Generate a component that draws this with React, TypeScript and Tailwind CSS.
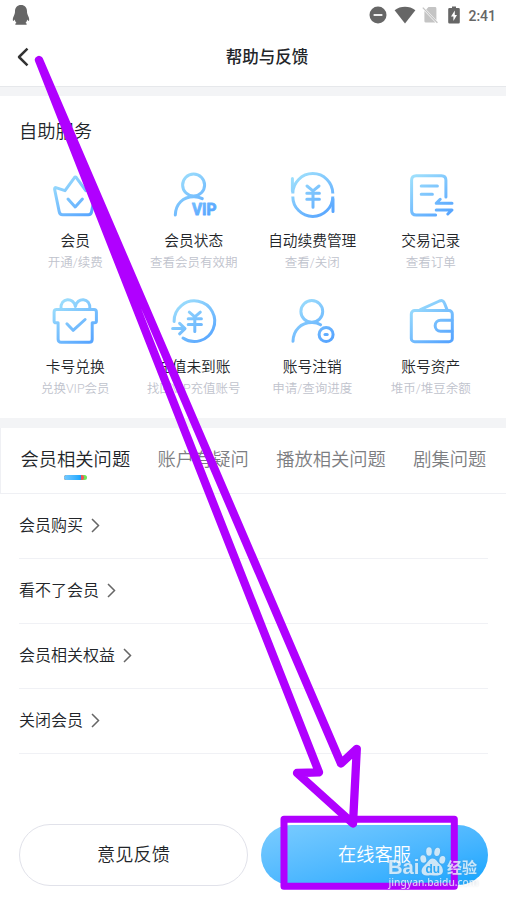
import type { ReactNode } from "react";

const YEN_WIDE = "M19 15l6 4.8 6-4.8M25 19.8v16.4M18.8 22.3h12.6M18.8 28.3h12.6";

function GradientIcon({ id, children }: { id: string; children: ReactNode }) {
  const paint = `url(#${id})`;
  return (
    <svg width="48" height="48" viewBox="0 0 48 48" fill="none" stroke={paint} strokeWidth="3" strokeLinecap="round" strokeLinejoin="round" className="shrink-0 overflow-visible">
      <defs>
        <linearGradient id={id} gradientUnits="userSpaceOnUse" x1="8" y1="3" x2="38" y2="46">
          <stop offset="0" stopColor="#9fe0fc" />
          <stop offset="1" stopColor="#57a5ff" />
        </linearGradient>
      </defs>
      {children}
    </svg>
  );
}

const services = [
  {
    title: "会员",
    hint: "开通/续费",
    art: (
      <>
        <path d="M3.6 18.2Q3.4 16 5.6 16.8L14 19.7 23.3 6.8Q24.4 5.4 25.5 6.8L34.8 19.7 43.2 16.8Q45.4 16 45.1 18.2L40.6 40.6Q40 43.7 37.4 43.7H11.6Q8.8 43.7 8.2 40.6Z" />
        <path d="M17 28l7.2 8 7.2-8" />
      </>
    ),
  },
  {
    title: "会员状态",
    hint: "查看会员有效期",
    art: (
      <>
        <circle cx="23.6" cy="14" r="11" />
        <path d="M5.3 44C5.6 33 13 25.7 23.6 25.7Q28.6 25.6 32.3 27.6" />
        <text x="22" y="44.4" fill="url(#service-1)" strokeWidth="0.9" fontFamily="Roboto, sans-serif" fontWeight="700" fontSize="17" textLength="24.6" lengthAdjust="spacingAndGlyphs">VIP</text>
      </>
    ),
  },
  {
    title: "自动续费管理",
    hint: "查看/关闭",
    art: (
      <>
        <path strokeLinecap="butt" d="M4.8 22.6A20 20 0 0 1 44.8 22.6M4.8 25.4A20 20 0 0 0 44.8 25.4" />
        <path d="M4.4 7.5V20M45 28V40.5" />
        <path d={YEN_WIDE} />
      </>
    ),
  },
  {
    title: "交易记录",
    hint: "查看订单",
    art: (
      <>
        <path d="M38.9 26V9.2Q38.9 4.7 34.4 4.7H9.1Q4.6 4.7 4.6 9.2V39.5Q4.6 44 9.1 44H28.6" />
        <path d="M14.2 15H30.4M14.2 23.3H25.4" />
        <path d="M45 32.3H29.2L33.2 28.3M29.2 39H45L40.8 43" />
      </>
    ),
  },
  {
    title: "卡号兑换",
    hint: "兑换VIP会员",
    art: (
      <>
        <path d="M5.6 12.5H43Q45.4 12.5 45.4 15V24Q45.4 25.8 43.5 25.8H41.2V42.2Q41.2 45.2 38.2 45.2H10.1Q7.1 45.2 7.1 42.2V25.8H5Q3.1 25.8 3.1 24V15Q3.1 12.5 5.6 12.5Z" />
        <path d="M10 12C9 0 23 0 24.4 9.5C25.8 0 39.8 0 38.8 12" />
        <path d="M15.9 26.8l6.2 6.5 12-10.8" />
      </>
    ),
  },
  {
    title: "充值未到账",
    hint: "找回VIP充值账号",
    art: (
      <>
        <path d="M4.1 24.4A20.3 20.3 0 1 1 13 41" />
        <path d="M2.6 31.6H14.8M9.6 26.4l5.4 5.2-5.4 5.2" />
        <path d="M19.3 15.2l5.5 4.6 5.5-4.6M24.8 19.8v14.6M18.2 21.8h13.2M18.2 27.5h13.2" />
      </>
    ),
  },
  {
    title: "账号注销",
    hint: "申请/查询进度",
    art: (
      <>
        <circle cx="23.8" cy="14.4" r="10.9" />
        <path d="M5 44.2C5.3 33 13 25.6 23.8 25.6Q29 25.5 32.6 27.8" />
        <circle cx="38.1" cy="37.5" r="7" />
        <path d="M37 37.5h2.2" />
      </>
    ),
  },
  {
    title: "账号资产",
    hint: "堆币/堆豆余额",
    art: (
      <>
        <rect x="4.3" y="13.5" width="41" height="31.3" rx="3.4" />
        <path d="M13.4 12.6L32.4 4Q36.2 2.6 37.4 6L40 12.6" />
        <path d="M45 23.3H33.6A5.45 5.45 0 0 0 33.6 34.2H45" />
      </>
    ),
  },
];

const tabs = ["会员相关问题", "账户有疑问", "播放相关问题", "剧集问题"];
const questions = ["会员购买", "看不了会员", "会员相关权益", "关闭会员"];

function StatusBar() {
  return (
    <div className="flex h-[29px] items-center pl-[12px] pr-[10px] text-[#666]">
      <svg width="18" height="20" viewBox="0 0 18 20" fill="currentColor">
        <path d="M9 0C5.3 0 3 2.600 3 6.300 3 8.400 2.500 9.500 1.700 11.200 .8 13 .6 14.600 1 15.800 1.400 16.300 2.200 15.500 2.800 14.600 3 16 3.600 17.200 4.500 18 3.300 18.400 3 19 3.500 19.700H14.500C15 19 14.700 18.400 13.500 18 14.400 17.200 15 16 15.200 14.600 15.800 15.500 16.600 16.300 17 15.800 17.400 14.600 17.200 13 16.300 11.200 15.500 9.500 15 8.400 15 6.300 15 2.600 12.700 0 9 0Z" />
      </svg>
      <div className="ml-auto flex items-center">
        <svg width="18" height="18" viewBox="0 0 18 18">
          <circle cx="9" cy="9" r="8.500" fill="currentColor" />
          <path d="M4.600 9h8.800" stroke="#fff" strokeWidth="1.800" />
        </svg>
        <svg width="22" height="18" viewBox="0 0 22 18" fill="currentColor" className="ml-[6.500px]">
          <path d="M11 17.500L.6 4.200C6.600-.4 15.400-.4 21.400 4.200Z" />
        </svg>
        <svg width="16" height="18" viewBox="0 0 16 18" className="ml-[6.500px]">
          <path d="M6.500 1H13Q14.400 1 14.400 2.400V14.200L4.200 3.400ZM2.400 5L13.400 16.600H3.800Q2.400 16.600 2.400 15.200Z" fill="#c4c4c4" />
          <path d="M.8 1.600L15.400 16.800" stroke="#c4c4c4" strokeWidth="1.300" />
        </svg>
        <svg width="12" height="18" viewBox="0 0 12 18" className="ml-[10px]">
          <path d="M4 .5H8V2H10.500Q11.800 2 11.800 3.300V16.200Q11.800 17.500 10.500 17.500H1.500Q.2 17.500 .2 16.200V3.300Q.2 2 1.500 2H4Z" fill="currentColor" />
          <path d="M6.800 4.500L3 10.600H5.400V15L9 8.900H6.800Z" fill="#fff" />
        </svg>
        <span className="ml-[8px] mt-[2px] font-[Roboto,sans-serif] text-[14px] font-medium leading-none">2:41</span>
      </div>
    </div>
  );
}

function Annotation() {
  return (
    <svg className="pointer-events-none absolute left-0 top-0" width="506" height="901" viewBox="0 0 506 901" fill="none" stroke="#b000ff" strokeLinecap="round" strokeLinejoin="round">
      <path strokeWidth="8.300" d="M39 60L319 772.300 297 773 353 823.500 356.800 748.800 341 763.500Z" />
      <rect x="284" y="819.300" width="170.300" height="67" strokeWidth="7" />
    </svg>
  );
}

function Watermark() {
  return (
    <svg className="pointer-events-none absolute left-[386px] top-[844px] drop-shadow-[0_0_1px_rgba(120,140,160,0.45)]" width="104" height="50" viewBox="0 0 104 50" fill="#fff" fillOpacity="0.72">
      <text x="2" y="30.300" fontFamily="Liberation Sans, sans-serif" fontWeight="700" fontSize="20.500" textLength="31.500" lengthAdjust="spacingAndGlyphs">Bai</text>
      <ellipse cx="37.300" cy="15" rx="2.900" ry="3.800" transform="rotate(-12 37.300 15)" />
      <ellipse cx="43" cy="7.500" rx="2.800" ry="4.200" />
      <ellipse cx="51.200" cy="7.900" rx="2.800" ry="4.200" transform="rotate(12 51.200 7.900)" />
      <ellipse cx="56.300" cy="15.800" rx="2.900" ry="3.900" transform="rotate(14 56.300 15.800)" />
      <path d="M46.500 14.500C50 14.500 51 18 54 20.600 58 24.500 58.500 31.500 51.500 31.500 48 31.500 45.500 31 42.500 31.400 35 32.500 33.500 26 38.500 21.500 42 18.500 43 14.500 46.500 14.500Z" />
      <text x="39.500" y="29" fill="#2fa9f6" fillOpacity="1" fontFamily="Liberation Sans, sans-serif" fontWeight="700" fontSize="12.500" textLength="14.500" lengthAdjust="spacingAndGlyphs">du</text>
      <text x="61" y="29.300" fontFamily="Noto Sans CJK SC, sans-serif" fontWeight="700" fontSize="15">经验</text>
      <text x="2.500" y="42.300" fontFamily="Noto Sans, sans-serif" fontWeight="500" fontSize="11" textLength="90" lengthAdjust="spacingAndGlyphs">jingyan.baidu.com</text>
    </svg>
  );
}

export default function App() {
  return (
    <div className="relative h-[901px] w-[506px] overflow-hidden bg-white font-[Roboto,'Noto_Sans_CJK_SC',sans-serif] font-[350] text-[#222529]">
      <StatusBar />
      <header className="grid h-[57px] grid-cols-[1fr_auto_1fr] items-center pb-[2px]">
        <svg width="12" height="20" viewBox="0 0 12 20" fill="none" stroke="#333" strokeWidth="2.500" strokeLinejoin="round" className="ml-[17px] mt-[1px]">
          <path d="M10.500 1.700L2 10l8.500 8.300" />
        </svg>
        <h1 className="ml-[28px] mt-[3px] text-[16.500px] font-medium leading-none">帮助与反馈</h1>
      </header>
      <div className="h-[10px] border-t border-[#e6e8eb] bg-[#f3f4f6]" />

      <section className="h-[322px]">
        <h2 className="pl-[19px] pt-[24px] text-[18.300px] leading-[24px]">自助服务</h2>
        <div className="mt-[27px] grid grid-cols-4 gap-y-[25.500px] px-[16px]">
          {services.map((s, i) => (
            <div key={s.title} className="flex h-[100px] flex-col items-center whitespace-nowrap">
              <GradientIcon id={`service-${i}`}>{s.art}</GradientIcon>
              <span className="mt-[11px] text-[14.700px] leading-[22px]">{s.title}</span>
              <span className="mt-[2px] text-[12.500px] leading-[18px] text-[#bfc3cd]">{s.hint}</span>
            </div>
          ))}
        </div>
      </section>
      <div className="h-[10px] bg-[#f3f4f6]" />

      <nav className="flex h-[66px] gap-[27.300px] overflow-hidden border-b border-l border-[#eff0f4] pl-[19.500px] text-[18.300px]">
        {tabs.map((tab, i) => (
          <div key={tab} className={i === 0 ? "flex shrink-0 flex-col items-center pt-[20px]" : "flex shrink-0 flex-col items-center pt-[20px] text-[#7d7e82]"}>
            <span className="leading-[24px]">{tab}</span>
            {i === 0 && (
              <span className="mt-[3px] flex h-[5px] w-[23px] overflow-hidden rounded-full bg-[#70e35b]">
                <span className="w-[20px] rounded-r-full bg-[#f4515a]">
                  <span className="block h-full w-[17px] bg-linear-to-r from-[#73cbff] to-[#0ba6ff]" />
                </span>
              </span>
            )}
          </div>
        ))}
      </nav>

      <ul className="ml-[19px] mr-[18px]">
        {questions.map((q) => (
          <li key={q} className="flex h-[65px] items-center border-b border-[#f0f1f5] pb-[2px] text-[16px]">
            <span className="mt-[1px] leading-none">{q}</span>
            <svg width="9" height="15" viewBox="0 0 9 15" fill="none" stroke="#666" strokeWidth="1.500" className="ml-[8px] mt-[1px]">
              <path d="M1 1l6.500 6.500L1 14" />
            </svg>
          </li>
        ))}
      </ul>

      <div className="ml-[19px] mr-[18px] mt-[70px] flex gap-[13px] text-[18.200px]">
        <button className="h-[62px] w-[229px] rounded-full border border-[#e1e2ea] leading-none">意见反馈</button>
        <button className="mt-[1px] h-[59.500px] w-[227px] rounded-full bg-linear-to-br from-[#7accff] to-[#03a5ff] leading-none text-white">在线客服</button>
      </div>

      <Annotation />
      <Watermark />
    </div>
  );
}
